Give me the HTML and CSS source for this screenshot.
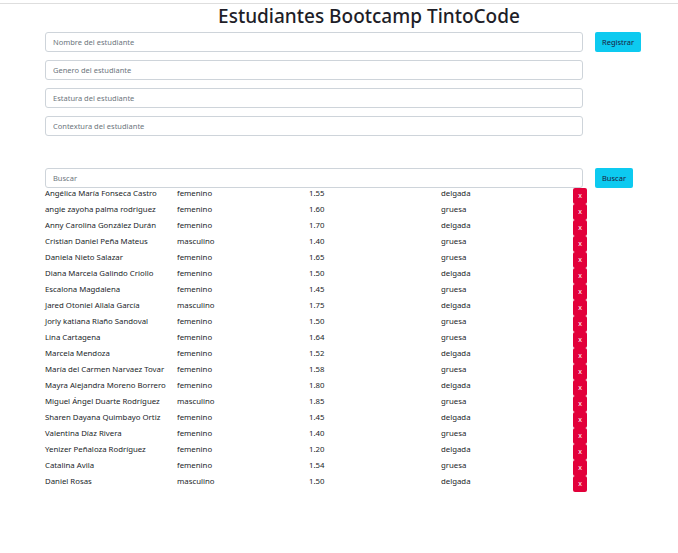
FILE: index.html
```html
<!DOCTYPE html>
<html lang="es">
<head>
<meta charset="utf-8">
<title>Estudiantes Bootcamp TintoCode</title>
<link rel="stylesheet" href="styles.css">
</head>
<body>
<div class="topline"></div>
<h1 class="title">Estudiantes Bootcamp TintoCode</h1>
<div class="form">
  <div class="field-row">
    <input class="field" type="text" placeholder="Nombre del estudiante">
    <button class="btn btn-info">Registrar</button>
  </div>
  <div class="field-row">
    <input class="field" type="text" placeholder="Genero del estudiante">
  </div>
  <div class="field-row">
    <input class="field" type="text" placeholder="Estatura del estudiante">
  </div>
  <div class="field-row">
    <input class="field" type="text" placeholder="Contextura del estudiante">
  </div>
</div>
<div class="search">
  <div class="field-row">
    <input class="field" type="text" placeholder="Buscar">
    <button class="btn btn-info">Buscar</button>
  </div>
</div>
<div class="list">
  <div class="row"><span>Angélica María Fonseca Castro</span><span>femenino</span><span>1.55</span><span>delgada</span><button class="del">x</button></div>
  <div class="row"><span>angie zayoha palma rodriguez</span><span>femenino</span><span>1.60</span><span>gruesa</span><button class="del">x</button></div>
  <div class="row"><span>Anny Carolina González Durán</span><span>femenino</span><span>1.70</span><span>delgada</span><button class="del">x</button></div>
  <div class="row"><span>Cristian Daniel Peña Mateus</span><span>masculino</span><span>1.40</span><span>gruesa</span><button class="del">x</button></div>
  <div class="row"><span>Daniela Nieto Salazar</span><span>femenino</span><span>1.65</span><span>gruesa</span><button class="del">x</button></div>
  <div class="row"><span>Diana Marcela Galindo Criollo</span><span>femenino</span><span>1.50</span><span>delgada</span><button class="del">x</button></div>
  <div class="row"><span>Escalona Magdalena</span><span>femenino</span><span>1.45</span><span>gruesa</span><button class="del">x</button></div>
  <div class="row"><span>Jared Otoniel Allala García</span><span>masculino</span><span>1.75</span><span>delgada</span><button class="del">x</button></div>
  <div class="row"><span>Jorly katiana Riaño Sandoval</span><span>femenino</span><span>1.50</span><span>gruesa</span><button class="del">x</button></div>
  <div class="row"><span>Lina Cartagena</span><span>femenino</span><span>1.64</span><span>gruesa</span><button class="del">x</button></div>
  <div class="row"><span>Marcela Mendoza</span><span>femenino</span><span>1.52</span><span>delgada</span><button class="del">x</button></div>
  <div class="row"><span>María del Carmen Narvaez Tovar</span><span>femenino</span><span>1.58</span><span>gruesa</span><button class="del">x</button></div>
  <div class="row"><span>Mayra Alejandra Moreno Borrero</span><span>femenino</span><span>1.80</span><span>delgada</span><button class="del">x</button></div>
  <div class="row"><span>Miguel Ángel Duarte Rodríguez</span><span>masculino</span><span>1.85</span><span>gruesa</span><button class="del">x</button></div>
  <div class="row"><span>Sharen Dayana Quimbayo Ortiz</span><span>femenino</span><span>1.45</span><span>delgada</span><button class="del">x</button></div>
  <div class="row"><span>Valentina Díaz Rivera</span><span>femenino</span><span>1.40</span><span>gruesa</span><button class="del">x</button></div>
  <div class="row"><span>Yenizer Peñaloza Rodríguez</span><span>femenino</span><span>1.20</span><span>delgada</span><button class="del">x</button></div>
  <div class="row"><span>Catalina Avila</span><span>femenino</span><span>1.54</span><span>gruesa</span><button class="del">x</button></div>
  <div class="row"><span>Daniel Rosas</span><span>masculino</span><span>1.50</span><span>delgada</span><button class="del">x</button></div>
</div>
</body>
</html>
```

FILE: styles.css
```css
* { box-sizing: border-box; }
html, body { margin: 0; padding: 0; background: #fff; }
body {
  font-family: "Noto Sans", "Liberation Sans", sans-serif;
  color: #212529;
  font-size: 7.8px;
}
.topline {
  margin-top: 3px;
  border-top: 1px solid #dedede;
}
.title {
  margin: 0;
  padding-left: 60px;
  text-align: center;
  font-size: 19px;
  line-height: 24px;
  font-weight: 500;
  color: #1e1e28;
}
.form {
  margin-top: 4px;
  padding-left: 45px;
  display: flex;
  flex-direction: column;
  gap: 8px;
}
.field-row {
  display: flex;
  align-items: flex-start;
  gap: 12px;
}
.field {
  width: 538px;
  height: 20px;
  border: 1px solid #ced4da;
  border-radius: 3px;
  padding: 0 7px;
  font-family: inherit;
  font-size: 7.5px;
  color: #212529;
  background: #fff;
  outline: none;
}
.field::placeholder { color: #6c757d; }
.btn {
  height: 20px;
  border: none;
  border-radius: 2px;
  padding: 0 7px;
  font-family: inherit;
  font-size: 7.5px;
  color: #1a1a40;
  cursor: pointer;
}
.btn-info { background: #0dcaf0; }
.search {
  margin-top: 32px;
  padding-left: 45px;
}
.list {
  padding-left: 45px;
  margin-top: 0;
}
.row {
  display: grid;
  grid-template-columns: 132px 132px 132px 132px 14px;
  height: 16px;
  align-items: start;
}
.row span {
  line-height: 10px;
  white-space: nowrap;
}
.del {
  width: 14px;
  height: 16px;
  border: none;
  border-radius: 2px;
  background: #e2003a;
  color: #fff;
  font-family: inherit;
  font-size: 7px;
  padding: 0;
  line-height: 16px;
}
```
